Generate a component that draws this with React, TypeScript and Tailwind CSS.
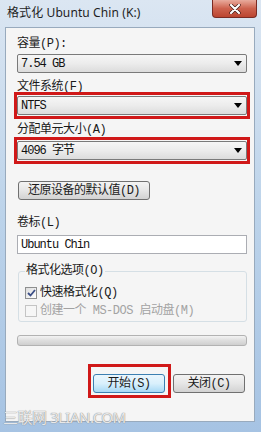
import React from "react";

const mono = { fontFamily: '"Liberation Mono", "Noto Sans CJK SC", monospace' } as React.CSSProperties;

function Arrow() {
  return (
    <svg width="8" height="5" viewBox="0 0 8 5" className="block">
      <path d="M0 0 L8 0 L4 5 Z" fill="#000" />
    </svg>
  );
}

function Select({ value }: { value: string }) {
  return (
    <div className="h-[19px] w-full flex items-center justify-between pl-[3px] pr-[4px] border border-[#7a7a7a] rounded-[2px] bg-gradient-to-b from-[#f6f6f6] via-[#ececec] to-[#dcdcdc]">
      <span className="text-[12px] leading-[14px] text-[#111] tracking-[-1px]" style={mono}>{value}</span>
      <Arrow />
    </div>
  );
}

function Label({ children, className = "" }: { children: React.ReactNode; className?: string }) {
  return (
    <div className={"text-[12px] leading-[14px] text-[#1a1a1a] tracking-[-0.5px] " + className} style={mono}>
      {children}
    </div>
  );
}

function Btn({ children, def = false, className = "" }: { children: React.ReactNode; def?: boolean; className?: string }) {
  return (
    <div
      className={
        "h-[19px] flex items-center justify-center rounded-[3px] border text-[12px] leading-[14px] text-[#1a1a1a] tracking-[-0.5px] " +
        (def
          ? "border-[#3c7fb1] bg-gradient-to-b from-[#eaf6fd] via-[#d9f0fc] to-[#a7d9f5] "
          : "border-[#707070] bg-gradient-to-b from-[#f3f3f3] via-[#e6e6e6] to-[#d2d2d2] ") +
        className
      }
      style={mono}
    >
      {children}
    </div>
  );
}

export default function App() {
  return (
    <div className="w-[261px] h-[432px] overflow-hidden relative flex flex-col bg-gradient-to-b from-[#dbe6f2] via-[#bcd3ea] to-[#a6c3e3]">
      {/* title bar */}
      <div className="h-[27px] shrink-0 flex items-center pl-[7px] pb-[1px]">
        <span className="text-[12px] leading-[14px] text-[#1e1e1e] tracking-[0.1px]" style={{ fontFamily: '"Noto Sans", "Noto Sans CJK SC", sans-serif' }}>
          格式化 Ubuntu Chin (K:)
        </span>
      </div>
      <div className="absolute top-0 right-[4px] w-[45px] h-[18px] rounded-b-[4px] border border-t-0 border-[#7a2b23] bg-gradient-to-b from-[#e8ab9d] via-[#cd624e] to-[#bb4530] flex items-center justify-center">
        <svg width="12" height="10" viewBox="0 0 12 10">
          <path d="M2 1 L10 9 M10 1 L2 9" stroke="#3a1510" strokeWidth="3.4" strokeLinecap="round" />
          <path d="M2 1 L10 9 M10 1 L2 9" stroke="#fff" strokeWidth="2.2" strokeLinecap="round" />
        </svg>
      </div>

      {/* client area */}
      <div className="ml-[5px] mr-[6px] h-[395px] shrink-0 border border-[#98aabd] bg-[#f5f5f5] flex flex-col pl-[11px] pr-[7px] pt-[9px]">
        <Label>容量(P):</Label>
        <div className="mt-[3px]">
          <Select value="7.54 GB" />
        </div>

        <Label className="mt-[7px]">文件系统(F)</Label>
        <div className="mt-[2px] relative">
          <div className="absolute -left-[3px] -right-[3px] -top-[4px] -bottom-[4px] border-[3px] border-[#d01818]" />
          <Select value="NTFS" />
        </div>

        <Label className="mt-[8px]">分配单元大小(A)</Label>
        <div className="mt-[4px] relative">
          <div className="absolute -left-[3px] -right-[3px] -top-[4px] -bottom-[4px] border-[3px] border-[#d01818]" />
          <Select value="4096 字节" />
        </div>

        <div className="mt-[21px] flex">
          <Btn className="w-[132px] ml-[1px]">还原设备的默认值(D)</Btn>
        </div>

        <Label className="mt-[16px]">卷标(L)</Label>
        <div className="mt-[5px] h-[19px] w-full flex items-center pl-[3px] border border-[#abadb3] bg-white">
          <span className="text-[12px] leading-[14px] text-[#111] tracking-[-1px]" style={mono}>Ubuntu Chin</span>
        </div>

        <fieldset className="mt-[10px] ml-[1px] border border-[#d5dfe5] rounded-[3px] h-[58px] pl-[6px] pr-[6px]">
          <legend className="px-[1px] text-[12px] leading-[14px] text-[#1a1a1a] tracking-[-0.5px]" style={mono}>
            格式化选项(O)
          </legend>
          <div className="mt-[6px] flex items-center h-[18px]">
            <div className="w-[12px] h-[12px] border border-[#8e8f8f] bg-gradient-to-br from-[#dcdcdc] to-[#ffffff] flex items-center justify-center">
              <svg width="9" height="8" viewBox="0 0 9 8">
                <path d="M1 4 L3.5 6.5 L8 1" stroke="#3b4e86" strokeWidth="1.8" fill="none" />
              </svg>
            </div>
            <span className="ml-[3px] text-[12px] leading-[14px] text-[#1a1a1a] tracking-[-0.5px]" style={mono}>快速格式化(Q)</span>
          </div>
          <div className="flex items-center h-[18px]">
            <div className="w-[12px] h-[12px] border border-[#c4c4c4] bg-[#f6f6f6]" />
            <span className="ml-[3px] text-[12px] leading-[14px] text-[#a3a3a3] tracking-[-0.5px]" style={mono}>创建一个 MS-DOS 启动盘(M)</span>
          </div>
        </fieldset>

        <div className="mt-[13px] h-[11px] w-full rounded-[3px] border border-[#b2b2b2] bg-gradient-to-b from-[#f3f3f3] via-[#dedede] to-[#cfcfcf]" />

        <div className="mt-[28px] flex justify-end pr-[2px] gap-[8px]">
          <div className="relative">
            <div className="absolute -left-[5px] -right-[6px] -top-[10px] -bottom-[5px] border-[3px] border-[#d01818]" />
            <Btn def className="w-[72px]">开始(S)</Btn>
          </div>
          <Btn className="w-[72px]">关闭(C)</Btn>
        </div>
      </div>

      {/* watermark */}
      <div
        className="absolute left-[3px] bottom-[7px] text-[15px] leading-[16px] text-white/80 tracking-[-0.5px]"
        style={{ fontFamily: '"Noto Sans", "Noto Sans CJK SC", sans-serif', textShadow: "0 0 1px #8a8a8a, 0 0 1px #8a8a8a" }}
      >
        三联网 3LIAN.COM
      </div>
    </div>
  );
}
